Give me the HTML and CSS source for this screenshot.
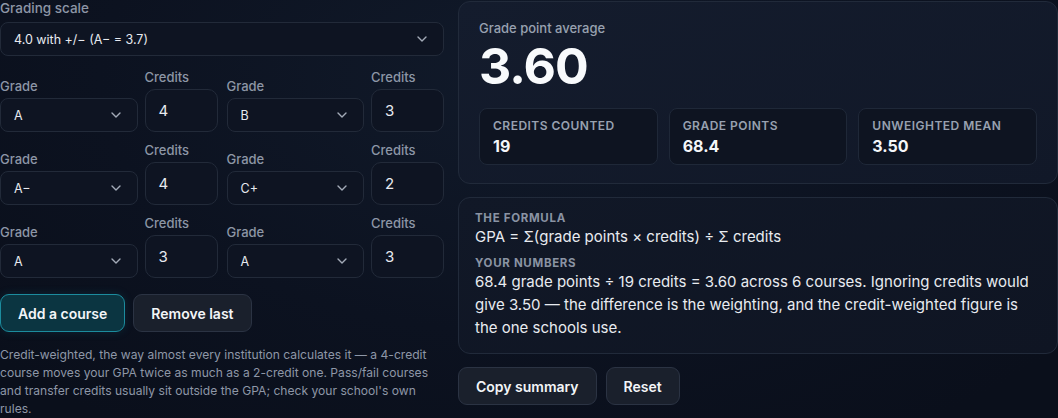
FILE: index.html
```html
<!DOCTYPE html>
<html lang="en">
<head>
<meta charset="utf-8">
<title>GPA calculator</title>
<link rel="stylesheet" href="styles.css">
</head>
<body>
<div class="page">
  <section class="left">
    <div class="lbl lbl-scale">Grading scale</div>
    <div class="select select-wide"><span>4.0 with +/− (A− = 3.7)</span><svg class="chev" viewBox="0 0 10 6" width="10" height="6"><polyline points="1,1 5,5 9,1"/></svg></div>

    <div class="courses">
      <div class="course">
        <div class="field"><div class="lbl">Grade</div><div class="select"><span>A</span><svg class="chev" viewBox="0 0 10 6" width="10" height="6"><polyline points="1,1 5,5 9,1"/></svg></div></div>
        <div class="field"><div class="lbl">Credits</div><div class="num">4</div></div>
      </div>
      <div class="course">
        <div class="field"><div class="lbl">Grade</div><div class="select"><span>B</span><svg class="chev" viewBox="0 0 10 6" width="10" height="6"><polyline points="1,1 5,5 9,1"/></svg></div></div>
        <div class="field"><div class="lbl">Credits</div><div class="num">3</div></div>
      </div>
      <div class="course">
        <div class="field"><div class="lbl">Grade</div><div class="select"><span>A−</span><svg class="chev" viewBox="0 0 10 6" width="10" height="6"><polyline points="1,1 5,5 9,1"/></svg></div></div>
        <div class="field"><div class="lbl">Credits</div><div class="num">4</div></div>
      </div>
      <div class="course">
        <div class="field"><div class="lbl">Grade</div><div class="select"><span>C+</span><svg class="chev" viewBox="0 0 10 6" width="10" height="6"><polyline points="1,1 5,5 9,1"/></svg></div></div>
        <div class="field"><div class="lbl">Credits</div><div class="num">2</div></div>
      </div>
      <div class="course">
        <div class="field"><div class="lbl">Grade</div><div class="select"><span>A</span><svg class="chev" viewBox="0 0 10 6" width="10" height="6"><polyline points="1,1 5,5 9,1"/></svg></div></div>
        <div class="field"><div class="lbl">Credits</div><div class="num">3</div></div>
      </div>
      <div class="course">
        <div class="field"><div class="lbl">Grade</div><div class="select"><span>A</span><svg class="chev" viewBox="0 0 10 6" width="10" height="6"><polyline points="1,1 5,5 9,1"/></svg></div></div>
        <div class="field"><div class="lbl">Credits</div><div class="num">3</div></div>
      </div>
    </div>

    <div class="actions">
      <button class="btn btn-primary">Add a course</button>
      <button class="btn">Remove last</button>
    </div>

    <p class="note">Credit-weighted, the way almost every institution calculates it — a 4-credit course moves your GPA twice as much as a 2-credit one. Pass/fail courses and transfer credits usually sit outside the GPA; check your school's own rules.</p>
  </section>

  <section class="right">
    <div class="card result">
      <div class="result-label">Grade point average</div>
      <div class="result-value">3.60</div>
      <div class="stats">
        <div class="stat"><div class="stat-label">Credits counted</div><div class="stat-value">19</div></div>
        <div class="stat"><div class="stat-label">Grade points</div><div class="stat-value">68.4</div></div>
        <div class="stat"><div class="stat-label">Unweighted mean</div><div class="stat-value">3.50</div></div>
      </div>
    </div>

    <div class="card explain">
      <div class="eyebrow">The formula</div>
      <div class="formula">GPA = Σ(grade points × credits) ÷ Σ credits</div>
      <div class="eyebrow eyebrow-2">Your numbers</div>
      <p class="numbers">68.4 grade points ÷ 19 credits = 3.60 across 6 courses. Ignoring credits would give 3.50 — the difference is the weighting, and the credit-weighted figure is the one schools use.</p>
    </div>

    <div class="actions actions-right">
      <button class="btn">Copy summary</button>
      <button class="btn">Reset</button>
    </div>
  </section>
</div>
</body>
</html>
```

FILE: styles.css
```css
* { box-sizing: border-box; }

html, body {
  margin: 0;
  padding: 0;
  height: 100%;
}

body {
  font-family: "Inter", "Noto Sans", "Liberation Sans", sans-serif;
  color: #e6e9ef;
  background: radial-gradient(ellipse 700px 420px at 520px 80px, #111a2a 0%, #0c1220 60%, #0a0f1b 100%);
  overflow: hidden;
}

.page {
  display: grid;
  grid-template-columns: 444px 600px;
  column-gap: 14px;
  align-items: start;
}

/* ---------- left column ---------- */
.lbl {
  font-size: 13px;
  line-height: 16px;
  font-weight: 500;
  color: #8d96a6;
  margin-bottom: 4px;
}

.lbl-scale {
  font-size: 13.5px;
  line-height: 17px;
  margin-bottom: 5px;
}

.select {
  height: 34px;
  display: flex;
  align-items: center;
  justify-content: space-between;
  padding: 0 16px 0 13px;
  border: 1px solid #222a39;
  border-radius: 8px;
  background: #0e1422;
  font-size: 12.5px;
  color: #e7eaf0;
}

.chev {
  fill: none;
  stroke: #a3abb8;
  stroke-width: 1.4;
  stroke-linecap: round;
  stroke-linejoin: round;
}

.courses {
  margin-top: 13px;
  display: grid;
  grid-template-columns: 1fr 1fr;
  column-gap: 9px;
  row-gap: 10px;
}

.course {
  display: grid;
  grid-template-columns: 1fr 73px;
  column-gap: 7px;
  align-items: end;
}

.num {
  height: 43px;
  display: flex;
  align-items: center;
  padding-left: 13px;
  border: 1px solid #222a39;
  border-radius: 10px;
  background: #0e1422;
  font-size: 15px;
  color: #e7eaf0;
}

.actions {
  display: flex;
  gap: 8px;
  margin-top: 16px;
}

.btn {
  height: 38px;
  padding: 0 17px;
  border-radius: 9px;
  border: 1px solid #2b3343;
  background: #1a202c;
  color: #f3f5f8;
  font-family: inherit;
  font-size: 14px;
  font-weight: 600;
}

.btn-primary {
  background: #0b3541;
  border-color: #1c8c9e;
  box-shadow: 0 0 10px rgba(20, 140, 160, 0.18);
}

.note {
  margin: 14px 0 0;
  font-size: 12.1px;
  line-height: 18px;
  color: #8e97a7;
  max-width: 440px;
}

/* ---------- right column ---------- */
.card {
  border: 1px solid #212a3a;
  border-radius: 12px;
  background: linear-gradient(160deg, #141c2d 0%, #111828 100%);
}

.result {
  margin-top: 1px;
  padding: 18px 20px 18px;
}

.result-label {
  font-size: 13px;
  line-height: 16px;
  font-weight: 500;
  color: #98a1b0;
}

.result-value {
  font-size: 50px;
  line-height: 61px;
  font-weight: 700;
  color: #f8fafc;
  letter-spacing: -0.02em;
  margin-bottom: 11px;
}

.stats {
  display: grid;
  grid-template-columns: repeat(3, 1fr);
  gap: 11px;
}

.stat {
  padding: 9px 13px 8px;
  border: 1px solid #1f2838;
  border-radius: 8px;
  background: #0e1421;
}

.stat-label {
  font-size: 12px;
  line-height: 16px;
  font-weight: 600;
  letter-spacing: 0.04em;
  text-transform: uppercase;
  color: #98a1b0;
  margin-bottom: 2px;
}

.stat-value {
  font-size: 16px;
  line-height: 20px;
  font-weight: 700;
  color: #f4f6f9;
}

.explain {
  margin-top: 13px;
  padding: 12px 16px 14px;
  background: linear-gradient(160deg, #111827 0%, #0f1523 100%);
}

.eyebrow {
  font-size: 11.5px;
  line-height: 16px;
  font-weight: 700;
  letter-spacing: 0.06em;
  text-transform: uppercase;
  color: #8a93a3;
}

.eyebrow-2 {
  margin-top: 8px;
  line-height: 14px;
}

.formula {
  font-size: 15px;
  line-height: 22px;
  color: #e8ebf0;
}

.numbers {
  margin: 0;
  font-size: 15px;
  line-height: 23px;
  color: #e8ebf0;
}

.actions-right {
  margin-top: 13px;
  gap: 9px;
}
```
